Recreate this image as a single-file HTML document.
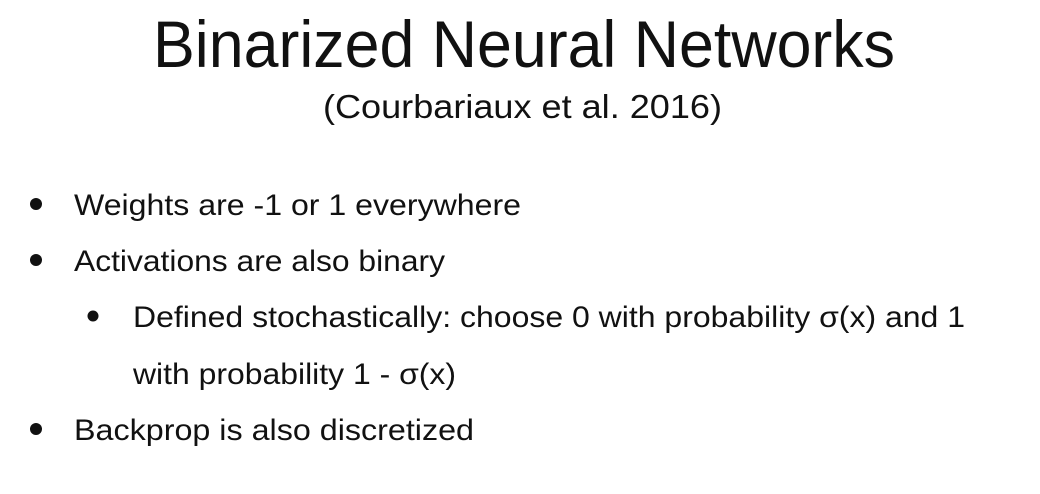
<!DOCTYPE html>
<html><head><style>html,body{margin:0;padding:0;background:#fff;}svg{display:block}</style></head>
<body>
<svg width="1040" height="494" viewBox="0 0 1040 494" xmlns="http://www.w3.org/2000/svg" font-family="Liberation Sans, sans-serif" fill="#111">
<text x="153" y="67" font-size="66" textLength="742" lengthAdjust="spacingAndGlyphs">Binarized Neural Networks</text>
<text x="323" y="118" font-size="33" textLength="399" lengthAdjust="spacingAndGlyphs">(Courbariaux et al. 2016)</text>
<circle cx="36" cy="204" r="6"/>
<text x="74" y="215" font-size="30" textLength="447" lengthAdjust="spacingAndGlyphs">Weights are -1 or 1 everywhere</text>
<circle cx="36" cy="260" r="6"/>
<text x="74" y="271" font-size="30" textLength="371" lengthAdjust="spacingAndGlyphs">Activations are also binary</text>
<circle cx="93" cy="316" r="5.5"/>
<text x="133" y="327" font-size="30" textLength="832" lengthAdjust="spacingAndGlyphs">Defined stochastically: choose 0 with probability σ(x) and 1</text>
<text x="133" y="384" font-size="30" textLength="323" lengthAdjust="spacingAndGlyphs">with probability 1 - σ(x)</text>
<circle cx="36" cy="429" r="6"/>
<text x="74" y="440" font-size="30" textLength="400" lengthAdjust="spacingAndGlyphs">Backprop is also discretized</text>
</svg>
</body></html>
